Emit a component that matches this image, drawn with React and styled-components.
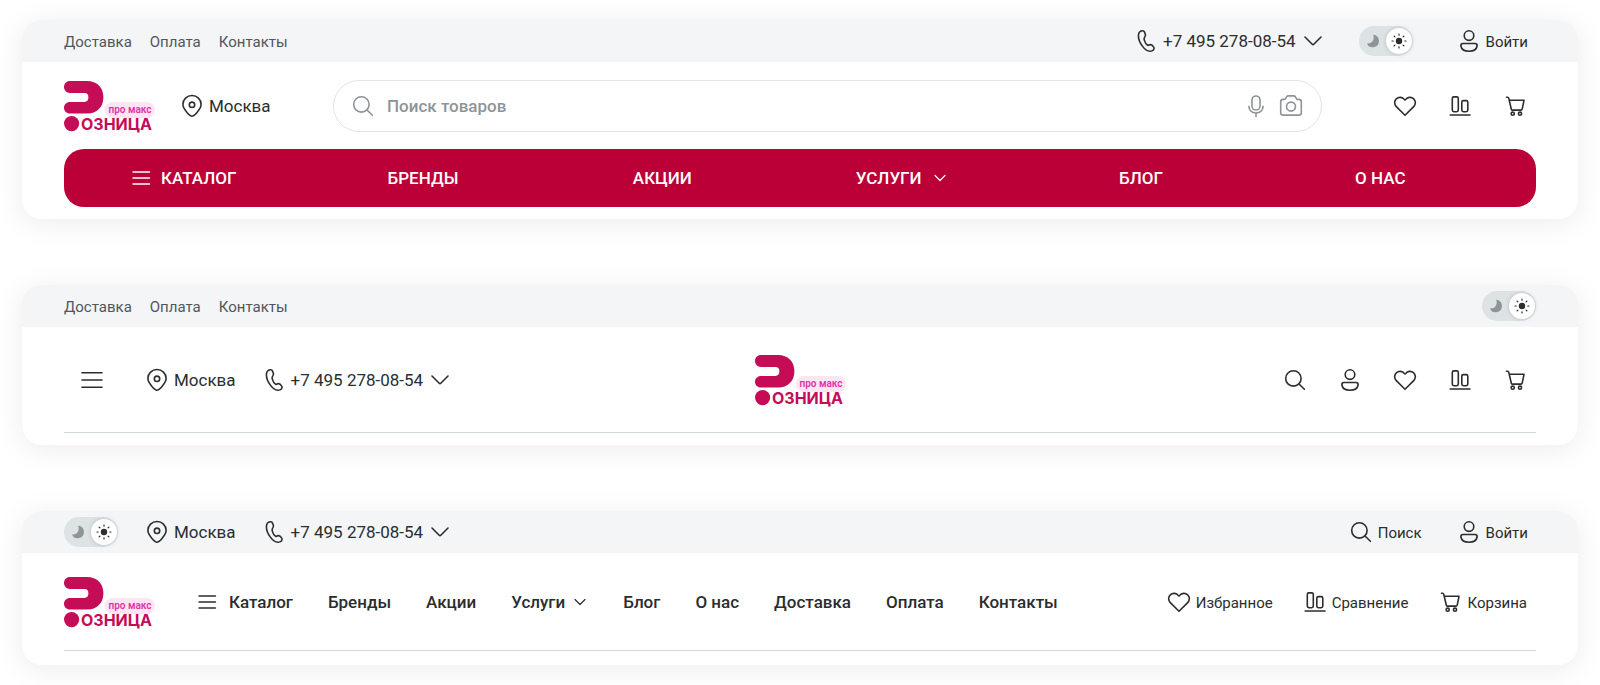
import React, { useState } from "react";
import styled, { createGlobalStyle } from "styled-components";

const color = {
  ink: "#2b2d2e",
  muted: "#4f575c",
  hint: "#8f9497",
  bar: "#f3f5f7",
  line: "#cdd6dc",
  field: "#dfe5ea",
  brand: "#bb0038",
  logo: "#c40c57",
};

const GlobalStyle = createGlobalStyle`
  *, *::before, *::after { box-sizing: border-box; }
  body {
    margin: 0;
    background: #fff;
    color: ${color.ink};
    font-family: Roboto, "Liberation Sans", sans-serif;
    font-size: 17px;
    line-height: 20px;
  }
  button, input { font: inherit; color: inherit; }
`;

const Page = styled.main`
  display: flex;
  flex-direction: column;
  gap: 66px;
  padding: 20px 22px;
`;

const Card = styled.header`
  border-radius: 20px;
  background: #fff;
  box-shadow: 0 4px 30px rgba(0, 0, 0, 0.08);
  padding-bottom: ${(p) => p.$bottom || 12}px;
`;

const TopBar = styled.div`
  display: flex;
  align-items: center;
  justify-content: space-between;
  height: 42px;
  padding: 0 42px;
  border-radius: 20px 20px 0 0;
  background: ${color.bar};
`;

const Row = styled.div`
  display: flex;
  align-items: center;
  height: ${(p) => p.$height}px;
  margin: 0 42px;
  border-bottom: ${(p) => (p.$line ? `1px solid ${color.line}` : "none")};
`;

const ThreeColumns = styled(Row)`
  display: grid;
  grid-template-columns: 1fr auto 1fr;
`;

const Group = styled.div`
  display: flex;
  align-items: center;
  gap: ${(p) => p.$gap || 0}px;
  padding-left: ${(p) => p.$left || 0}px;
  padding-right: ${(p) => p.$right || 0}px;
`;

const EndGroup = styled(Group)`
  justify-content: flex-end;
  margin-left: auto;
`;

const InfoNav = styled.nav`
  display: flex;
  gap: 18px;
  padding-top: 2px;
  font-size: 15px;
`;

const InfoLink = styled.a`
  color: ${color.muted};
  text-decoration: none;
`;

const Action = styled.button`
  display: inline-flex;
  align-items: center;
  gap: 5px;
  padding: 0;
  border: 0;
  background: none;
  color: ${color.ink};
  white-space: nowrap;
  cursor: pointer;
`;

const ActionLink = styled(Action).attrs({ as: "a" })`
  text-decoration: none;
`;

const SmallLabel = styled.span`
  padding-top: 2px;
  font-size: 15px;
`;

const PhoneArrow = styled.span`
  display: inline-flex;
  margin-left: 2px;
`;

const Svg = styled.svg`
  display: block;
  flex: none;
  fill: none;
  stroke: currentColor;
  stroke-width: 1.6;
  stroke-linecap: round;
  stroke-linejoin: round;
`;

const ToggleLabel = styled.label`
  position: relative;
  display: grid;
  grid-template-columns: 26px 26px;
  align-items: center;
  width: 54px;
  height: 30px;
  padding: 0 1px;
  border-radius: 15px;
  background: #dde2e5;
  cursor: pointer;
`;

const ToggleInput = styled.input`
  position: absolute;
  inset: 0;
  width: 100%;
  height: 100%;
  margin: 0;
  opacity: 0;
  cursor: pointer;
`;

const ToggleSide = styled.span`
  display: grid;
  place-items: center;
  height: 26px;
  border-radius: 13px;
  color: ${(p) => (p.$on ? color.ink : color.hint)};
  background: ${(p) => (p.$on ? "#fff" : "transparent")};
  box-shadow: ${(p) => (p.$on ? "0 0 4px rgba(0, 0, 0, 0.16)" : "none")};
`;

const LogoLink = styled.a`
  display: block;
  flex: none;
`;

const LogoSvg = styled.svg`
  display: block;
  overflow: visible;
`;

const City = styled(Group)`
  flex: 0 0 153px;
  margin-left: 25px;
`;

const Search = styled.form`
  display: flex;
  flex: 1;
  align-items: center;
  height: 52px;
  padding: 0 18px 0 17px;
  border: 1px solid ${color.field};
  border-radius: 26px;
  color: ${color.hint};
`;

const SearchInput = styled.input`
  flex: 1;
  min-width: 0;
  margin: 0 12px;
  padding: 0;
  border: 0;
  outline: none;
  background: none;
  color: ${color.ink};
  font-weight: 500;
  &::placeholder { color: ${color.hint}; opacity: 1; }
`;

const FieldButton = styled(Action)`
  margin-left: 11px;
  color: ${color.hint};
`;

const RedNav = styled.nav`
  display: grid;
  grid-template-columns: repeat(6, 1fr);
  height: 58px;
  margin: 0 42px;
  padding-right: 36px;
  border-radius: 20px;
  background: ${color.brand};
`;

const RedLink = styled.a`
  display: flex;
  align-items: center;
  justify-content: center;
  gap: 10px;
  color: #fff;
  font-weight: 500;
  text-decoration: none;
  text-transform: uppercase;
`;

const MainNav = styled.nav`
  display: flex;
  align-items: center;
  gap: 35px;
  margin-left: 42px;
`;

const MainLink = styled.a`
  display: flex;
  align-items: center;
  gap: ${(p) => p.$gap || 0}px;
  color: ${color.ink};
  font-weight: 500;
  text-decoration: none;
  white-space: nowrap;
`;

function Icon({ children, size = 24 }) {
  return (
    <Svg width={size} height={size} viewBox={`0 0 ${size} ${size}`} aria-hidden="true">
      {children}
    </Svg>
  );
}

const PinIcon = () => (
  <Icon>
    <path d="M12 22.2C10.2 22.2 2.9 15.4 2.9 10.3A9.1 8.8 0 0 1 21.1 10.3C21.1 15.4 13.8 22.2 12 22.2Z" />
    <circle cx="12" cy="10.8" r="2.7" />
  </Icon>
);

const PhoneIcon = () => (
  <Icon>
    <path d="M6.3 2.4C7.7 1.3 9.9 1.7 10.5 3.1L11.3 5.3C11.7 6.4 11.4 7 10.8 7.9C10 9 9.9 9.7 10.3 11.1C10.9 13.4 12.1 15.2 13.7 16.3C14.6 16.7 15.2 15.5 16.4 15.6C17.4 15.7 19 17 19.7 18.1C20.4 19.3 19.9 20.9 18.5 21.6C14.6 23.5 11 20.8 8.2 16.9C5.5 13.2 4.1 9.2 4.5 5.7C4.7 4.2 5.3 3.1 6.3 2.4Z" />
  </Icon>
);

const UserIcon = () => (
  <Icon>
    <circle cx="12" cy="6.6" r="4.8" />
    <path d="M6 14.5H18C19.8 14.5 20.3 15.6 20.1 17C19.5 20.6 16 22.2 12 22.2S4.5 20.6 3.9 17C3.7 15.6 4.2 14.5 6 14.5Z" />
  </Icon>
);

const SearchIcon = () => (
  <Icon>
    <circle cx="10.4" cy="10.4" r="7.7" />
    <path d="M16 16L21.4 21.3" />
  </Icon>
);

const HeartIcon = () => (
  <Icon>
    <path d="M12 21.3L3.3 12.6C1 10.2 1.2 6.7 3.3 4.8C5.8 2.6 9.6 3.1 11.2 5.4C11.7 6.2 12.3 6.2 12.8 5.4C14.4 3.1 18.2 2.6 20.7 4.8C22.8 6.7 23 10.2 20.7 12.6Z" />
  </Icon>
);

const CompareIcon = () => (
  <Icon>
    <rect x="4.3" y="2.9" width="6" height="14.8" rx="1.6" />
    <rect x="13.8" y="6.6" width="6" height="11.1" rx="1.6" />
    <path d="M2.2 21H22" />
  </Icon>
);

const CartIcon = () => (
  <Icon>
    <path d="M3.5 3.3H4.6C5.2 3.3 5.6 3.7 5.8 4.4L8.3 15.3C8.4 15.9 8.8 16.1 9.4 16.1H17.8C18.6 16.1 19 15.8 19.2 15.1L21 6.3H6.4" />
    <circle cx="9.7" cy="19.7" r="1.6" />
    <circle cx="17" cy="19.7" r="1.6" />
  </Icon>
);

const MicIcon = () => (
  <Icon>
    <rect x="8" y="2" width="8" height="14" rx="4" />
    <path d="M4.9 12.2C4.9 16.2 7.9 19 12 19S19.1 16.2 19.1 12.2M12 19V22.4" />
  </Icon>
);

const CameraIcon = () => (
  <Icon>
    <path d="M4.2 5.4H5.4C7.4 5.4 6.9 1.9 9 1.9H15C17.1 1.9 16.6 5.4 18.6 5.4H19.8C21.5 5.4 22.3 6.3 22.3 7.9V18.7C22.3 20.3 21.5 21.1 19.8 21.1H4.2C2.5 21.1 1.7 20.3 1.7 18.7V7.9C1.7 6.3 2.5 5.4 4.2 5.4Z" />
    <circle cx="12" cy="12.6" r="4.5" />
  </Icon>
);

const MenuIcon = () => (
  <Icon>
    <path d="M2 4.8H22M2 12H22M2 19.2H22" />
  </Icon>
);

const SmallMenuIcon = () => (
  <Icon size={20}>
    <path d="M2 4H18.5M2 10H18.5M2 16H18.5" strokeWidth="1.4" />
  </Icon>
);

const ChevronIcon = () => (
  <Icon size={20}>
    <path d="M2 6L9.2 13.2C9.8 13.8 10.2 13.8 10.8 13.2L18 6" />
  </Icon>
);

const SmallChevronIcon = () => (
  <Icon size={16}>
    <path d="M3 5.5L8 10.5L13 5.5" strokeWidth="1.2" />
  </Icon>
);

const MoonIcon = () => (
  <Icon size={16}>
    <path d="M8.2 1.8A6.2 6.2 0 1 1 2 10.4C5.2 11.4 10.4 7.8 8.2 1.8Z" fill="currentColor" stroke="none" />
  </Icon>
);

const SunIcon = () => (
  <Icon size={16}>
    <circle cx="8" cy="8" r="3.2" fill="currentColor" stroke="none" />
    <path
      d="M8 1V2.2M8 13.8V15M1 8H2.2M13.8 8H15M3.1 3.1L3.9 3.9M12.1 12.1L12.9 12.9M3.1 12.9L3.9 12.1M12.1 3.9L12.9 3.1"
      strokeWidth="1.2"
    />
  </Icon>
);

function Logo() {
  return (
    <LogoLink href="#home" aria-label="Розница про макс">
      <LogoSvg width="91" height="52" viewBox="0 -1 91 52">
        <path
          fill={color.logo}
          d="M6 0H23C33 0 39.4 6.4 39.4 16.3S33 32.6 23 32.6H6C2.6 32.6 0 30.2 0 26.8S2.6 20.9 6 20.9H20.5C23 20.9 24.4 19.3 24.4 16.3S23 11.9 20.5 11.9H6C2.6 11.9 0 9.4 0 6S2.6 0 6 0Z"
        />
        <circle fill={color.logo} cx="7.6" cy="42.6" r="7.6" />
        <rect x="41" y="21" width="50" height="16" rx="8" fill="#ffe5f1" />
        <text x="66" y="32" textAnchor="middle" fontSize="10" fontWeight="600" fill="#d936a8">
          про макс
        </text>
        <text x="17" y="49" fontFamily='Inter, sans-serif' fontSize="16" fontWeight="700" fill={color.logo}>
          ОЗНИЦА
        </text>
      </LogoSvg>
    </LogoLink>
  );
}

function ThemeToggle() {
  const [light, setLight] = useState(true);
  return (
    <ToggleLabel>
      <ToggleSide $on={!light}><MoonIcon /></ToggleSide>
      <ToggleSide $on={light}><SunIcon /></ToggleSide>
      <ToggleInput
        type="checkbox"
        aria-label="Светлая тема"
        checked={light}
        onChange={(e) => setLight(e.target.checked)}
      />
    </ToggleLabel>
  );
}

const CityButton = () => (
  <Action type="button"><PinIcon />Москва</Action>
);

const PhoneButton = () => (
  <Action type="button">
    <PhoneIcon />+7 495 278-08-54
    <PhoneArrow><ChevronIcon /></PhoneArrow>
  </Action>
);

const LoginLink = () => (
  <ActionLink href="#login"><UserIcon /><SmallLabel>Войти</SmallLabel></ActionLink>
);

const InfoLinks = () => (
  <InfoNav>
    <InfoLink href="#delivery">Доставка</InfoLink>
    <InfoLink href="#payment">Оплата</InfoLink>
    <InfoLink href="#contacts">Контакты</InfoLink>
  </InfoNav>
);

const ShopIcons = () => (
  <>
    <ActionLink href="#favorites" aria-label="Избранное"><HeartIcon /></ActionLink>
    <ActionLink href="#compare" aria-label="Сравнение"><CompareIcon /></ActionLink>
    <ActionLink href="#cart" aria-label="Корзина"><CartIcon /></ActionLink>
  </>
);

function FullHeader() {
  return (
    <Card>
      <TopBar>
        <InfoLinks />
        <Group $right={8}>
          <Group $gap={36} $right={44}>
            <PhoneButton />
            <ThemeToggle />
          </Group>
          <LoginLink />
        </Group>
      </TopBar>
      <Row $height={87}>
        <Logo />
        <City><CityButton /></City>
        <Search role="search" onSubmit={(e) => e.preventDefault()}>
          <SearchIcon />
          <SearchInput type="search" placeholder="Поиск товаров" aria-label="Поиск товаров" />
          <FieldButton type="button" aria-label="Голосовой поиск"><MicIcon /></FieldButton>
          <FieldButton type="button" aria-label="Поиск по фото"><CameraIcon /></FieldButton>
        </Search>
        <Group $gap={31} $left={71} $right={9}><ShopIcons /></Group>
      </Row>
      <RedNav>
        <RedLink href="#catalog"><SmallMenuIcon />Каталог</RedLink>
        <RedLink href="#brands">Бренды</RedLink>
        <RedLink href="#sales">Акции</RedLink>
        <RedLink href="#services">Услуги<SmallChevronIcon /></RedLink>
        <RedLink href="#blog">Блог</RedLink>
        <RedLink href="#about">О нас</RedLink>
      </RedNav>
    </Card>
  );
}

function CompactHeader() {
  return (
    <Card>
      <TopBar>
        <InfoLinks />
        <ThemeToggle />
      </TopBar>
      <ThreeColumns $height={106} $line>
        <Group $gap={41} $left={16}>
          <Action type="button" aria-label="Меню"><MenuIcon /></Action>
          <Group $gap={26}>
            <CityButton />
            <PhoneButton />
          </Group>
        </Group>
        <Logo />
        <EndGroup $gap={31} $right={9}>
          <ActionLink href="#search" aria-label="Поиск"><SearchIcon /></ActionLink>
          <ActionLink href="#login" aria-label="Войти"><UserIcon /></ActionLink>
          <ShopIcons />
        </EndGroup>
      </ThreeColumns>
    </Card>
  );
}

function InlineHeader() {
  return (
    <Card $bottom={14}>
      <TopBar>
        <Group $gap={27}>
          <ThemeToggle />
          <Group $gap={26}>
            <CityButton />
            <PhoneButton />
          </Group>
        </Group>
        <Group $gap={35} $right={8}>
          <ActionLink href="#search"><SearchIcon /><SmallLabel>Поиск</SmallLabel></ActionLink>
          <LoginLink />
        </Group>
      </TopBar>
      <Row $height={98} $line>
        <Logo />
        <MainNav>
          <MainLink href="#catalog" $gap={12}><SmallMenuIcon />Каталог</MainLink>
          <MainLink href="#brands">Бренды</MainLink>
          <MainLink href="#sales">Акции</MainLink>
          <MainLink href="#services" $gap={7}>Услуги<SmallChevronIcon /></MainLink>
          <MainLink href="#blog">Блог</MainLink>
          <MainLink href="#about">О нас</MainLink>
          <MainLink href="#delivery">Доставка</MainLink>
          <MainLink href="#payment">Оплата</MainLink>
          <MainLink href="#contacts">Контакты</MainLink>
        </MainNav>
        <EndGroup $gap={30} $right={9}>
          <ActionLink href="#favorites"><HeartIcon /><SmallLabel>Избранное</SmallLabel></ActionLink>
          <ActionLink href="#compare"><CompareIcon /><SmallLabel>Сравнение</SmallLabel></ActionLink>
          <ActionLink href="#cart"><CartIcon /><SmallLabel>Корзина</SmallLabel></ActionLink>
        </EndGroup>
      </Row>
    </Card>
  );
}

export default function App() {
  return (
    <>
      <GlobalStyle />
      <Page>
        <FullHeader />
        <CompactHeader />
        <InlineHeader />
      </Page>
    </>
  );
}
